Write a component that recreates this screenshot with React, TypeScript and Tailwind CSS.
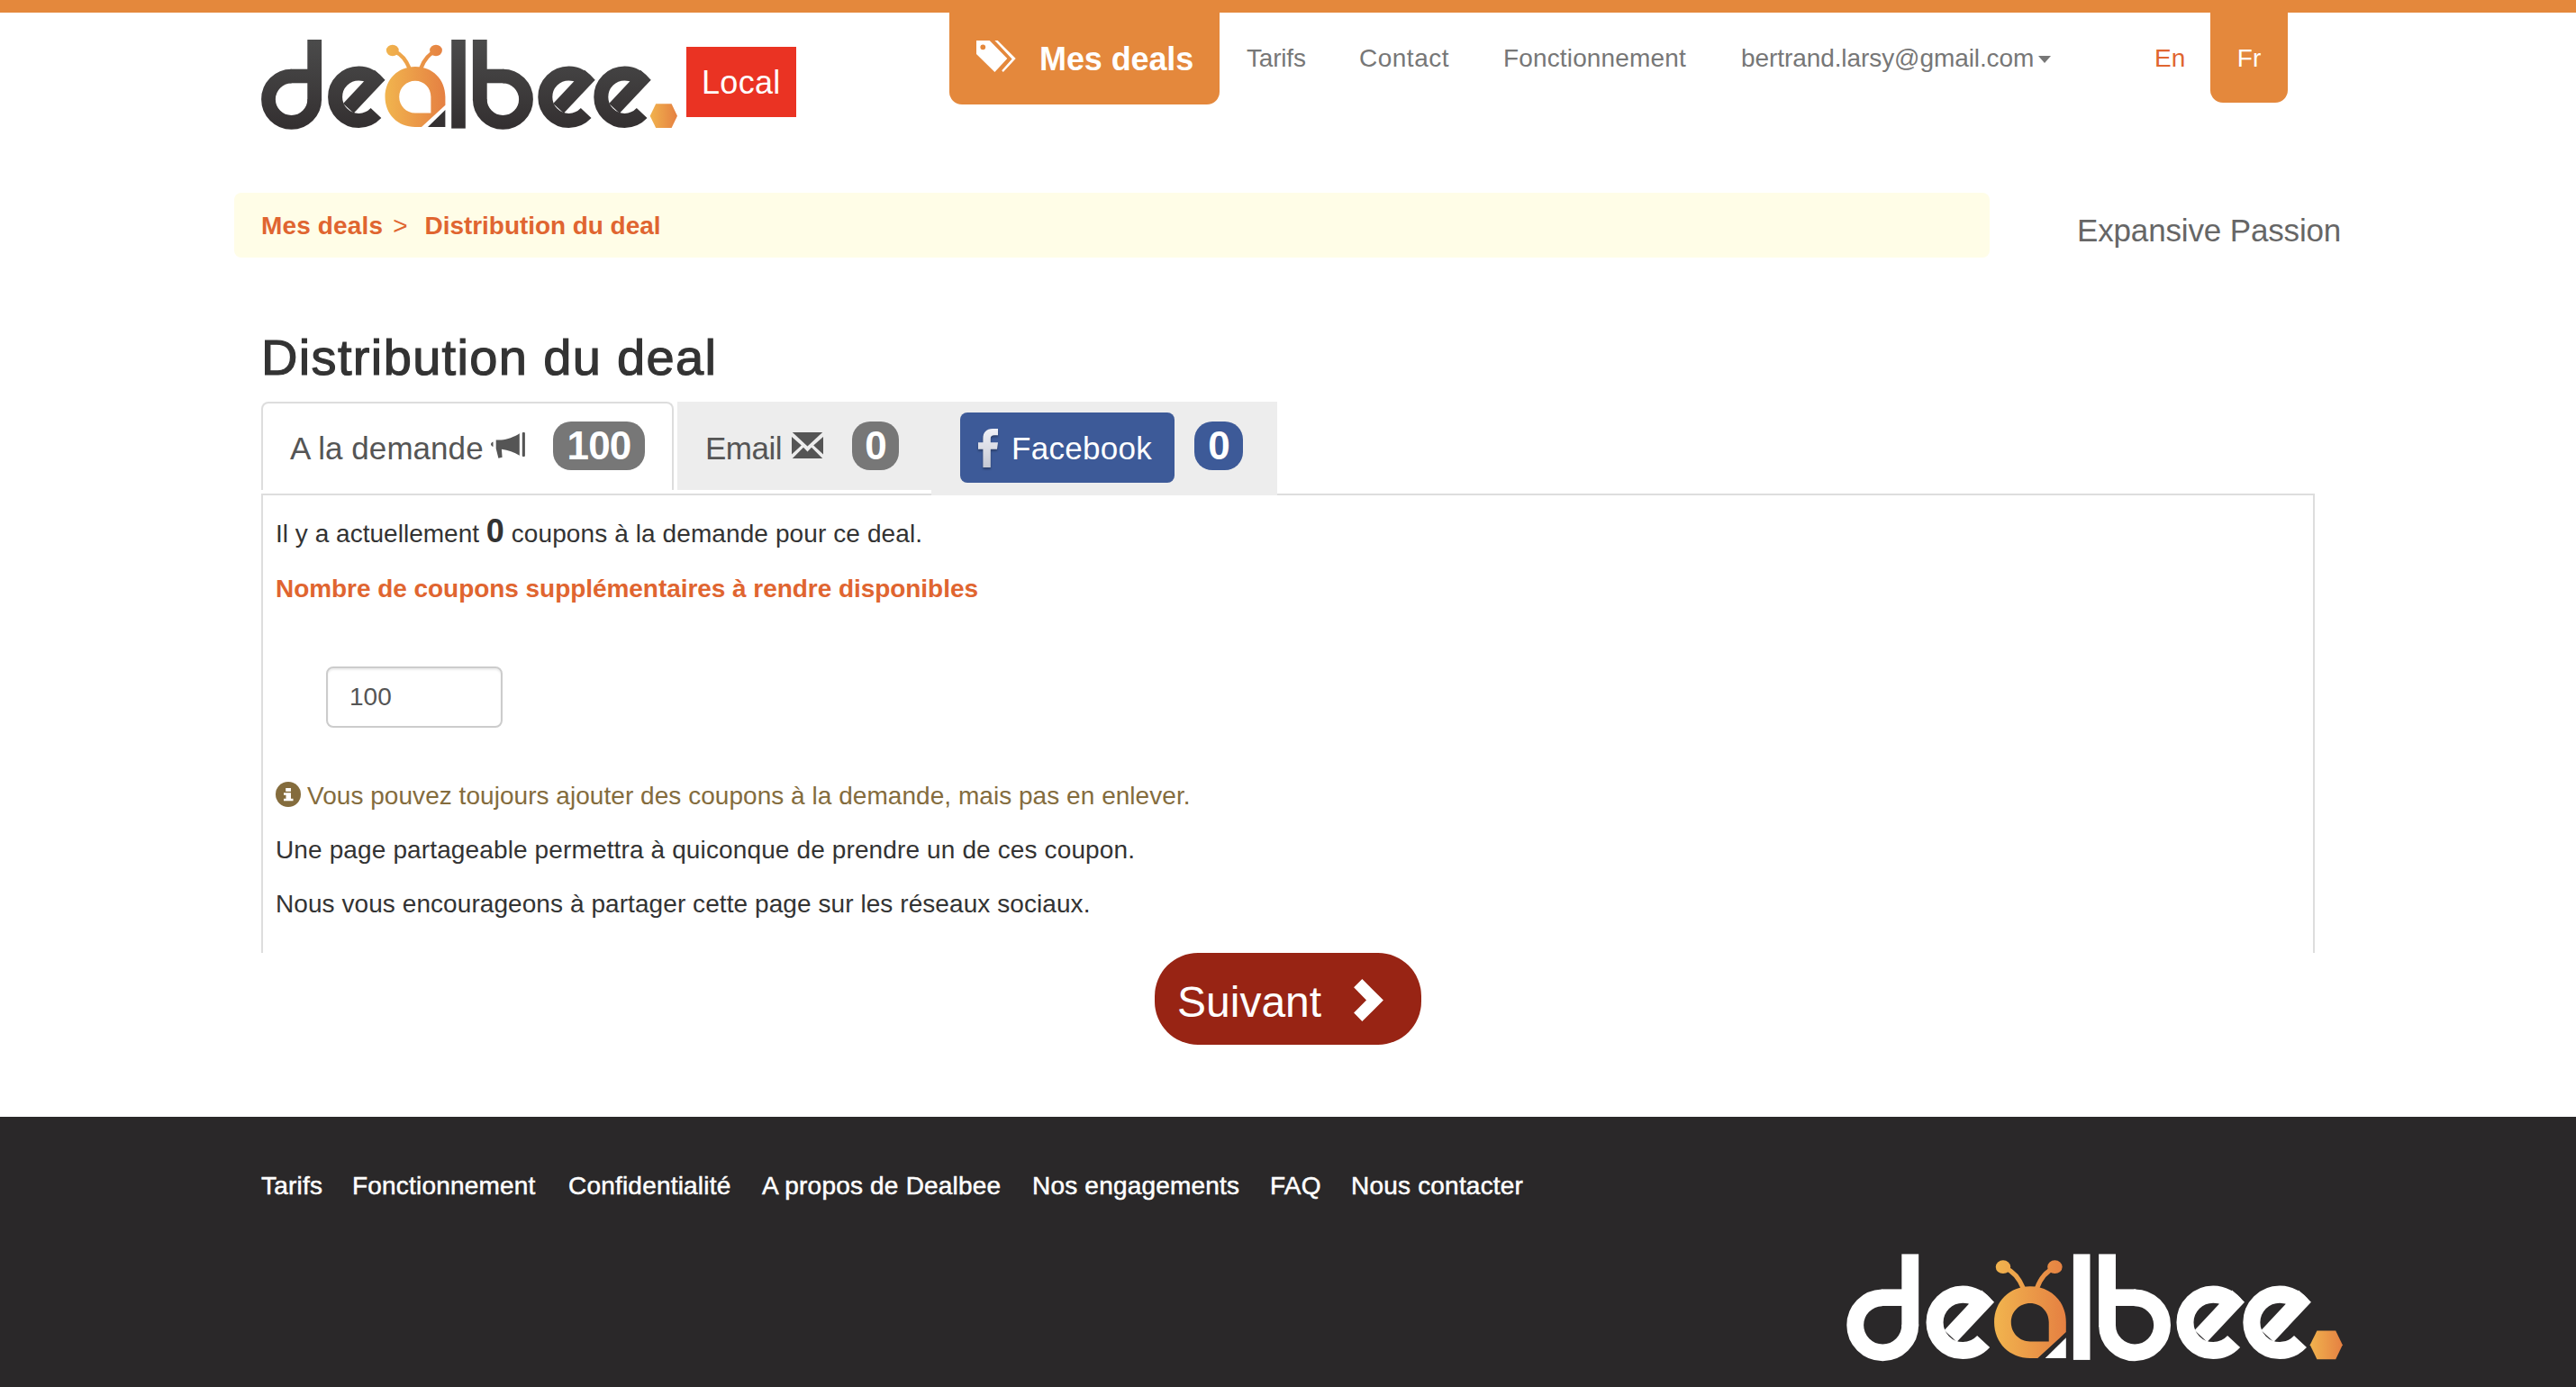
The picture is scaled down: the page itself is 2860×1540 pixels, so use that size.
import React from "react";

type LogoProps = { id: string; className: string; top: string; bottom: string };

function RoundE({ x, fill }: { x: number; fill: string }) {
  return (
    <g transform={`translate(${x} 0)`} fill="none" stroke={fill} strokeWidth="16">
      <circle cx="398.3" cy="107.7" r="26.2" pathLength={360} strokeDasharray="284 76" strokeDashoffset="-43" />
      <line x1="421.7" y1="83.2" x2="386.8" y2="120.4" />
    </g>
  );
}

function DealbeeLogo({ id, className, top, bottom }: LogoProps) {
  const ink = `url(#${id}-ink)`;
  const honey = `url(#${id}-honey)`;
  const hex = `url(#${id}-hex)`;
  return (
    <svg className={className} viewBox="289 43 464 102" role="img" aria-label="dealbee">
      <defs>
        <linearGradient id={`${id}-ink`} gradientUnits="userSpaceOnUse" x1="0" y1="44" x2="0" y2="144">
          <stop offset="0" stopColor={top} />
          <stop offset="1" stopColor={bottom} />
        </linearGradient>
        <linearGradient id={`${id}-honey`} gradientUnits="userSpaceOnUse" x1="428" y1="0" x2="494" y2="0">
          <stop offset="0" stopColor="#f1b44e" />
          <stop offset="1" stopColor="#e58042" />
        </linearGradient>
        <linearGradient id={`${id}-hex`} gradientUnits="userSpaceOnUse" x1="721" y1="0" x2="752" y2="0">
          <stop offset="0" stopColor="#f1b44e" />
          <stop offset="1" stopColor="#e58042" />
        </linearGradient>
      </defs>

      <circle cx="323.6" cy="110.2" r="25.6" fill="none" stroke={ink} strokeWidth="15.8" pathLength={4} strokeDasharray="3 1" />
      <rect x="322.5" y="76.7" width="20" height="15.6" fill={ink} />
      <rect x="341.3" y="44" width="15.8" height="67.6" fill={ink} />

      <RoundE x={0} fill={ink} />

      <path
        fill={honey}
        fillRule="evenodd"
        d="M461 74C442 74 427.5 88 427.5 107.5S442 141 461 141H468L494.4 116.7V107.5C494.4 88 480 74 461 74ZM461 89.7C471 89.7 478.4 97.5 478.4 107.5V125.5H461C451 125.5 443.2 117.5 443.2 107.5S451 89.7 461 89.7Z"
      />
      <g fill="none" stroke={honey} strokeWidth="4.4">
        <path d="M438 57C445 60 451 67 454.600 76" />
        <path d="M483.500 57C476 60 470.500 67 467.200 76" />
      </g>
      <ellipse cx="435.8" cy="56" rx="6.9" ry="6.2" fill={honey} />
      <ellipse cx="484" cy="56" rx="6.9" ry="6.2" fill={honey} />
      <path d="M494.400 122V141H475Z" fill={ink} />

      <rect x="501.200" y="44" width="15.600" height="98.600" fill={ink} />

      <rect x="524.900" y="44" width="15.800" height="67.600" fill={ink} />
      <rect x="539" y="76.700" width="20.500" height="15.600" fill={ink} />
      <circle
        cx="558.4"
        cy="110.2"
        r="25.6"
        fill="none"
        stroke={ink}
        strokeWidth="15.8"
        pathLength={4}
        strokeDasharray="3 1"
        strokeDashoffset="-3"
      />

      <RoundE x={233.2} fill={ink} />
      <RoundE x={295.2} fill={ink} />

      <path d="M721.700 128.700L728.200 115.300H745.600L752 128.700L745.600 142H728.200Z" fill={hex} />
    </svg>
  );
}

const footerLinks: [string, string][] = [
  ["Tarifs", "w-[101px]"],
  ["Fonctionnement", "w-[240px]"],
  ["Confidentialité", "w-[215px]"],
  ["A propos de Dealbee", "w-[300px]"],
  ["Nos engagements", "w-[264px]"],
  ["FAQ", "w-[90px]"],
  ["Nous contacter", "w-[210px]"],
];

function Header() {
  return (
    <header>
      <div className="h-[14px] bg-[#e4883c]" />
      <div className="flex h-[200px] items-start pl-[289px] text-[28px] leading-[101px] text-[#777]">
        <DealbeeLogo id="head" className="mt-[29px] h-[102px] w-[464px]" top="#4b4b4b" bottom="#332f30" />
        <div className="mt-[38px] ml-[9px] h-[78px] w-[122px] bg-[#ea3323] pl-[17px] text-[36px] leading-[79px] tracking-[0.3px] text-white">
          Local
        </div>
        <nav className="ml-[170px] flex items-start">
          <a className="flex h-[102px] w-[300px] items-start rounded-b-[14px] bg-[#e4883c] pl-[30px] text-[36px] leading-[103px] font-bold tracking-[-0.1px] text-white">
            <svg className="mt-[31px] mr-[26px] h-[35px] w-[44px]" viewBox="0 0 44 35" fill="currentColor">
              <path fillRule="evenodd" d="M0 0H14.700L34.300 20L20.400 35L0 15ZM7.300 4.400A2.900 2.900 0 1 0 7.300 10.200A2.900 2.900 0 1 0 7.300 4.400Z" />
              <path d="M20.400 0H23.700L43.700 20L29.800 35L28.200 33.300L39.600 20.500Z" />
            </svg>
            Mes deals
          </a>
          <a className="ml-[30px] w-[125px] tracking-[-0.2px]">Tarifs</a>
          <a className="w-[160px] tracking-[0.5px]">Contact</a>
          <a className="w-[264px] tracking-[0.15px]">Fonctionnement</a>
          <a className="w-[330px] tracking-[-0.08px]">bertrand.larsy@gmail.com</a>
          <svg className="mt-[48px] h-2 w-[14px]" viewBox="0 0 14 8" fill="currentColor">
            <path d="M0 0H14L7 8Z" />
          </svg>
          <a className="ml-[115px] w-[62px] text-[#e06530]">En</a>
          <a className="h-[100px] w-[86px] rounded-b-[14px] bg-[#e4883c] text-center text-white">Fr</a>
        </nav>
      </div>
    </header>
  );
}

function Badge({ children, className }: { children: React.ReactNode; className: string }) {
  return (
    <span className={`h-[54px] rounded-[20px] text-center text-[44px] leading-[54px] font-bold tracking-[-0.8px] text-white ${className}`}>
      {children}
    </span>
  );
}

function Tabs() {
  return (
    <div className="ml-[290px] flex h-[102px] items-start text-[35px] leading-[104px] text-[#555]">
      <div className="mr-1 flex h-[98px] w-[458px] items-start rounded-t-[8px] border-2 border-b-0 border-[#ddd] pl-[30px] leading-[100px]">
        <span className="w-[223px] tracking-[0.05px]">A la demande</span>
        <svg className="mt-8 h-[29px] w-[38px]" viewBox="0 0 38 29" fill="currentColor">
          <path d="M2.500 10.500V16C-.8 15 -.8 11.500 2.500 10.500ZM5.700 8.500H11.500C18 8 26 5 31.800 1.200V25.800C26 22 19 19.500 11.900 18.700L12.600 27.800L8.400 28.800L5.700 18Z" />
          <rect x="34.800" y="0" width="3.100" height="27" rx="1" />
        </svg>
        <Badge className="mt-5 ml-[31px] w-[102px] bg-[#777]">100</Badge>
      </div>
      <div className="flex h-[98px] w-[282px] items-start bg-[#ededed] pl-[31px]">
        <span className="w-[96px] tracking-[-0.5px]">Email</span>
        <svg className="mt-[34px] h-[29px] w-[35px]" viewBox="0 0 35 29" fill="currentColor">
          <path d="M.8 0H34.200L17.500 15.500ZM0 5L10.800 14.500L0 24.500ZM35 5L24.200 14.500L35 24.500ZM.8 29L13 16.800L17.500 21.500L22 16.800L34.200 29Z" />
        </svg>
        <Badge className="mt-[22px] ml-8 w-[52px] bg-[#777]">0</Badge>
      </div>
      <div className="relative z-10 flex h-[104px] w-[384px] items-start bg-[#ededed] pl-8">
        <div className="mt-3 flex h-[78px] w-[238px] items-start rounded-[8px] bg-[#3d5a98] pl-5 leading-[80px] text-white">
          <svg className="mt-[18px] mr-[15px] h-[43px] w-[22px] overflow-visible drop-shadow-[0_2px_1px_rgba(0,0,0,0.3)]" viewBox="0 0 22 43">
            <defs>
              <linearGradient id="fb-metal" x1="0" y1="0" x2="0" y2="1">
                <stop offset="0" stopColor="#f0f1f7" />
                <stop offset="1" stopColor="#c6c9d3" />
              </linearGradient>
            </defs>
            <path
              fill="url(#fb-metal)"
              d="M5.400 43V22.700H0V15.300H5.400V11C5.400 4 9 0 16 0H22V7.300H18C15 7.300 13.800 8.500 13.800 11V15.300H22L21 22.700H13.800V43Z"
            />
          </svg>
          <span className="tracking-[0.3px]">Facebook</span>
        </div>
        <Badge className="mt-[22px] ml-[22px] w-[54px] bg-[#3d5a98]">0</Badge>
      </div>
    </div>
  );
}

function Panel() {
  return (
    <section className="ml-[290px] h-[510px] w-[2280px] border-2 border-b-0 border-[#ddd] pt-[22px] pl-[14px] text-[28px] leading-[40px] text-[#333]">
      <p className="h-10 tracking-[0.02px]">
        Il y a actuellement <b className="text-[36px] leading-none">0</b> <span className="tracking-[0.1px]">coupons à la demande pour ce deal.</span>
      </p>
      <p className="mt-[22px] font-bold tracking-[-0.05px] text-[#e06530]">Nombre de coupons supplémentaires à rendre disponibles</p>
      <div className="mt-[66px] ml-[56px] h-[68px] w-[196px] rounded-[8px] border-2 border-[#ccc] pl-[24px] leading-[64px] text-[#555] shadow-[inset_0_2px_2px_rgba(0,0,0,0.075)]">
        100
      </div>
      <p className="mt-14 flex items-start tracking-[0.04px] text-[#846c3d]">
        <svg className="mt-1 mr-[7px] h-7 w-7" viewBox="0 0 28 28">
          <circle cx="14" cy="14" r="14" fill="currentColor" />
          <path fill="#fff" d="M11.200 7H17V10.700H11.200ZM9 12.300H17V18.700H19.500V21.300H9V18.700H11.500V14.700H9Z" />
        </svg>
        Vous pouvez toujours ajouter des coupons à la demande, mais pas en enlever.
      </p>
      <p className="mt-5 tracking-[0.13px]">Une page partageable permettra à quiconque de prendre un de ces coupon.</p>
      <p className="mt-5 tracking-[0.07px]">Nous vous encourageons à partager cette page sur les réseaux sociaux.</p>
    </section>
  );
}

function Footer() {
  return (
    <footer className="mt-20 h-[300px] bg-[#2a2829] pt-[57px]">
      <div className="flex pl-[290px] text-[28px] leading-[40px] tracking-[0.2px] text-white [-webkit-text-stroke:0.5px_white]">
        {footerLinks.map(([label, width]) => (
          <a key={label} className={width}>
            {label}
          </a>
        ))}
      </div>
      <DealbeeLogo id="foot" className="mt-[54px] ml-[2049px] h-[122px] w-[553px]" top="#ffffff" bottom="#ffffff" />
    </footer>
  );
}

export default function App() {
  return (
    <div className="h-[1540px] w-[2860px] overflow-hidden bg-white font-['Liberation_Sans',Arial,sans-serif] whitespace-nowrap">
      <Header />
      <div className="flex h-[84px] items-start pl-[260px]">
        <div className="flex h-[72px] w-[1949px] rounded-[8px] bg-[#fffde7] pl-[30px] text-[28px] leading-[73px] font-bold text-[#e06530]">
          <a className="tracking-[0.15px]">Mes deals</a>
          <span className="mr-[19px] ml-[11px] font-normal">&gt;</span>
          <a className="tracking-[-0.05px]">Distribution du deal</a>
        </div>
        <div className="ml-[97px] text-[35px] leading-[84px] tracking-[-0.15px] text-[#666]">Expansive Passion</div>
      </div>
      <h1 className="mt-[67px] mb-[17px] ml-[290px] text-[56px] leading-[64px] tracking-[1.35px] text-[#333] [-webkit-text-stroke:1.2px_#333]">
        Distribution du deal
      </h1>
      <Tabs />
      <Panel />
      <button className="mx-auto flex h-[102px] w-[296px] items-start rounded-[48px] bg-[#982414] pl-[25px] text-[48px] leading-[110px] text-white">
        Suivant
        <svg className="mt-[29px] ml-9 h-[47px] w-[33px]" viewBox="0 0 33 47.300" fill="currentColor">
          <path d="M0 9.300L9.300 0L33 23.700L9.300 47.300L0 37.700L14 23.700Z" />
        </svg>
      </button>
      <Footer />
    </div>
  );
}
